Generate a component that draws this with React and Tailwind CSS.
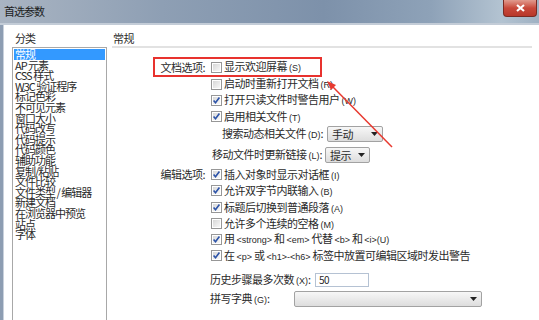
import React from 'react';

const categories = [
    "常规", "AP 元素", "CSS 样式", "W3C 验证程序", "标记色彩", "不可见元素", "窗口大小",
    "代码改写", "代码提示", "代码颜色", "辅助功能", "复制/粘贴", "文件比较",
    "文件类型 / 编辑器", "新建文档", "在浏览器中预览", "站点", "字体"
];

function CheckBox({ checked }) {
    return (
        <svg width="11" height="11" viewBox="0 0 11 11" className="shrink-0">
            <defs>
                <linearGradient id="cbg" x1="0" y1="0" x2="1" y2="1">
                    <stop offset="0" stopColor="#d8d8d8" />
                    <stop offset="1" stopColor="#f8f8f8" />
                </linearGradient>
            </defs>
            <rect x="0.5" y="0.5" width="10" height="10" fill="#fff" stroke="#979797" />
            <rect x="2" y="2" width="7" height="7" fill="url(#cbg)" />
            {checked && <path d="M2.6 5.6 L4.5 7.8 L8.4 2.6" fill="none" stroke="#2c53a8" strokeWidth="1.6" />}
        </svg>
    );
}

function Select({ value, className }) {
    return (
        <div className={`h-[16px] border border-[#a2a2a2] rounded-[2px] bg-gradient-to-b from-[#f7f7f7] to-[#dddddd] flex items-center justify-between pl-[4px] pr-[4px] ${className}`}>
            <span className="leading-[14px]">{value}</span>
            <svg width="7" height="4" viewBox="0 0 7 4"><path d="M0 0 H7 L3.5 4 Z" fill="#222" /></svg>
        </div>
    );
}

function Check({ label, checked, h, title }) {
    return (
        <div className={`flex items-center ${h}`}>
            <div className="w-[99px] text-right pr-[6px] shrink-0">{title}</div>
            <CheckBox checked={checked} />
            <span className="ml-[2px] whitespace-nowrap">{label}</span>
        </div>
    );
}

const tag = "font-['Liberation_Sans',sans-serif] text-[9px] tracking-normal";

export default function App() {
    return (
        <div className="relative w-[539px] h-[320px] overflow-hidden bg-white font-['Noto_Sans_CJK_SC','Noto_Sans',sans-serif] text-[#2a2a2a]">
            {/* title bar */}
            <div className="h-[23px] flex items-start justify-between bg-[linear-gradient(90deg,#a9b4c2_0%,#8e9fb4_30%,#7d91aa_60%,#8ea2b8_80%,#b3c3d1_93%,#9fb1c3_100%)]">
                <span className="pl-[4px] pt-[4px] text-[11px] leading-[14px] tracking-[-1px] text-[#1c1c1c]">首选参数</span>
                <div className="mr-[2px] w-[34px] h-[17px] rounded-b-[4px] border border-t-0 border-[#7a2a22] bg-gradient-to-b from-[#e09a8e] via-[#c8483a] to-[#b8372a] flex items-center justify-center">
                    <svg width="9" height="8" viewBox="0 0 9 8"><path d="M1 1 L8 7 M8 1 L1 7" stroke="#fff" strokeWidth="2.2" /></svg>
                </div>
            </div>
            <div className="h-[2px] bg-[#c3ccd7]" />

            <div className="flex h-[295px]">
                <div className="w-[4px] bg-[#8d9db2] border-r border-[#c9d1dc]" />

                {/* categories */}
                <div className="w-[108px] pl-[8px] shrink-0 text-[11px]">
                    <div className="pt-[6px] pl-[3px] h-[22px] leading-[14px] tracking-[-1px]">分类</div>
                    <div className="w-[95px] h-[290px] border border-[#a8a8a8] p-[1px]">
                        {categories.map((c, i) => (
                            <div key={c} className={`h-[10.6px] leading-[10.6px] pl-[1px] tracking-[-1px] whitespace-nowrap ${i === 0 ? 'bg-[#3399ff] text-white' : ''}`}>{c}</div>
                        ))}
                    </div>
                </div>

                {/* options */}
                <div className="flex-1 text-[11px] tracking-[-0.5px]">
                    <div className="pt-[6px] pl-[1px] h-[21px] leading-[14px]">常规</div>
                    <div className="h-[2px] w-[420px] bg-[#e2e2e2]" />
                    <div className="h-[10px]" />
                    <Check h="h-[18px]" title="文档选项:" label={<>显示欢迎屏幕 <span className={tag}>(S)</span></>} />
                    <Check h="h-[16px]" label={<>启动时重新打开文档 <span className={tag}>(R)</span></>} />
                    <Check h="h-[16px]" checked label={<>打开只读文件时警告用户 <span className={tag}>(W)</span></>} />
                    <Check h="h-[17px]" checked label={<>启用相关文件 <span className={tag}>(T)</span></>} />
                    <div className="h-[17px] flex items-center pl-[110px]">
                        <span className="w-[105px] whitespace-nowrap">搜索动态相关文件 <span className={tag}>(D)</span>:</span>
                        <Select value="手动" className="w-[56px]" />
                    </div>
                    <div className="h-[25px] flex items-center pl-[100px]">
                        <span className="w-[113px] whitespace-nowrap">移动文件时更新链接 <span className={tag}>(L)</span>:</span>
                        <Select value="提示" className="w-[45px]" />
                    </div>
                    <Check h="h-[15px]" checked title="编辑选项:" label={<>插入对象时显示对话框 <span className={tag}>(I)</span></>} />
                    <Check h="h-[17px]" checked label={<>允许双字节内联输入 <span className={tag}>(B)</span></>} />
                    <Check h="h-[17px]" checked label={<>标题后切换到普通段落 <span className={tag}>(A)</span></>} />
                    <Check h="h-[15px]" label={<>允许多个连续的空格 <span className={tag}>(M)</span></>} />
                    <Check h="h-[16px]" checked label={<>用 <span className={tag}>&lt;strong&gt;</span> 和 <span className={tag}>&lt;em&gt;</span> 代替 <span className={tag}>&lt;b&gt;</span> 和 <span className={tag}>&lt;i&gt;(U)</span></>} />
                    <Check h="h-[17px]" checked label={<>在 <span className={tag}>&lt;p&gt;</span> 或 <span className={tag}>&lt;h1&gt;-&lt;h6&gt;</span> 标签中放置可编辑区域时发出警告</>} />
                    <div className="mt-[8px] h-[16px] flex items-center pl-[98px]">
                        <span className="w-[105px] whitespace-nowrap">历史步骤最多次数 <span className={tag}>(X)</span>:</span>
                        <div className="w-[54px] h-[14px] border border-[#b5c2d3] bg-white pl-[3px] leading-[12px] text-[10px]">50</div>
                    </div>
                    <div className="mt-[3px] h-[16px] flex items-center pl-[98px]">
                        <span className="w-[84px] whitespace-nowrap">拼写字典 <span className={tag}>(G)</span>:</span>
                        <Select value="" className="w-[188px]" />
                    </div>
                </div>
            </div>

            {/* annotation */}
            <div className="absolute left-[153px] top-[57px] w-[169px] h-[20px] border-2 border-[#e8322e]" />
            <svg className="absolute left-0 top-0 pointer-events-none" width="539" height="320">
                <line x1="392" y1="147" x2="332" y2="86" stroke="#e8392f" strokeWidth="1.5" />
                <polygon points="327,81 336,85 331,90" fill="#e8392f" />
            </svg>
        </div>
    );
}
